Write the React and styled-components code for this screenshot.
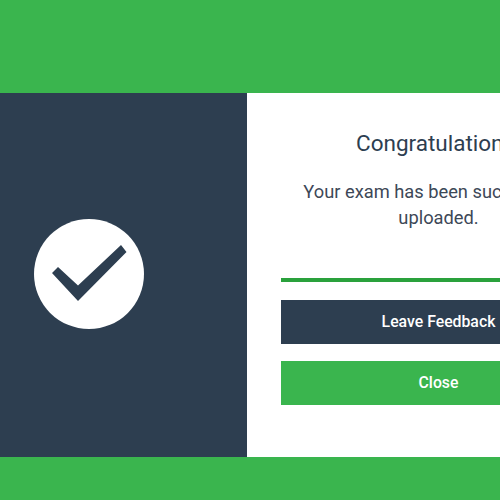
import React from "react";
import styled, { createGlobalStyle } from "styled-components";

const Global = createGlobalStyle`
  html, body { margin: 0; padding: 0; width: 500px; height: 500px; overflow: hidden; background: #3ab54e; }
  * { box-sizing: border-box; }
`;
const Page = styled.div`
  width: 500px; height: 500px; overflow: hidden; padding-top: 93px;
  background: #3ab54e; font-family: Roboto, "Liberation Sans", sans-serif;
`;
const Modal = styled.div`
  display: flex; width: 650px; height: 364px; background: #fff;
`;
const Side = styled.div`
  flex: 0 0 247px; background: #2d3e50; display: flex; align-items: center;
  padding-left: 34px; padding-bottom: 2px;
`;
const Badge = styled.div`
  width: 110px; height: 110px; border-radius: 50%; background: #fff;
  display: flex; align-items: center; justify-content: center;
`;
const Body = styled.div`
  width: 383px; padding: 36px 34px 0; display: flex; flex-direction: column;
`;
const Title = styled.h1`
  margin: 0; font-size: 22.5px; line-height: 29px; font-weight: 400; color: #2d3e50; text-align: center;
`;
const Message = styled.p`
  margin: 21px 0 0; font-size: 18.3px; line-height: 26px; font-weight: 400; color: #3d4857; text-align: center;
`;
const Rule = styled.div`
  height: 4px; background: #2aa13c; margin-top: 47px;
`;
const Button = styled.button`
  display: block; width: 100%; height: 43.5px; border: 0; padding: 0 0 1px;
  background: ${p => (p.$primary ? "#3ab54e" : "#2d3e50")};
  margin-top: ${p => (p.$primary ? "17.5px" : "18px")};
  color: #fff; font: 500 15.8px Roboto, sans-serif; text-align: center;
`;

export default function App() {
  return (
    <Page>
      <Global />
      <Modal>
        <Side>
          <Badge>
            <svg width="110" height="110" viewBox="0 0 110 110" style={{ flex: "none" }}>
              <polygon points="18,54 24,48 44,66.5 87,26 92.5,33 44,82" fill="#2d3e50" />
            </svg>
          </Badge>
        </Side>
        <Body>
          <Title>Congratulations!</Title>
          <Message>Your exam has been successfully uploaded.</Message>
          <Rule />
          <Button>Leave Feedback</Button>
          <Button $primary>Close</Button>
        </Body>
      </Modal>
    </Page>
  );
}
